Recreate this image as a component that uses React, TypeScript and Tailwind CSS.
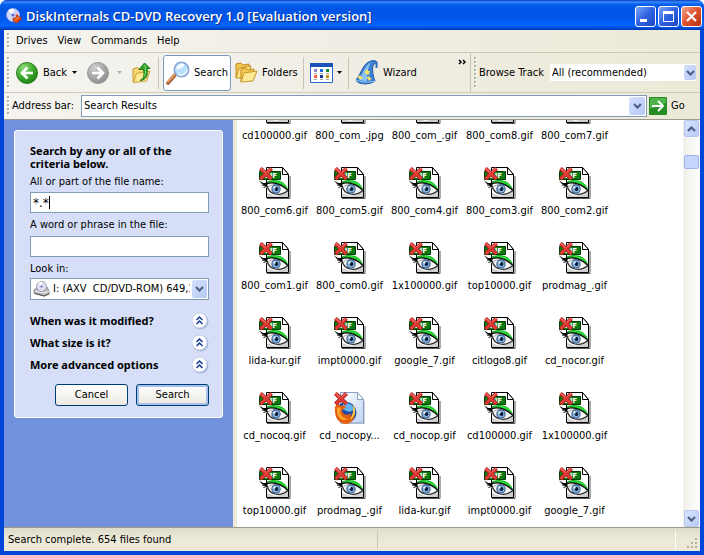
import { useState } from "react";
import type { ReactNode } from "react";

const files = [
  "cd100000.gif", "800_com_.jpg", "800_com_.gif", "800_com8.gif", "800_com7.gif",
  "800_com6.gif", "800_com5.gif", "800_com4.gif", "800_com3.gif", "800_com2.gif",
  "800_com1.gif", "800_com0.gif", "1x100000.gif", "top10000.gif", "prodmag_.gif",
  "lida-kur.gif", "impt0000.gif", "google_7.gif", "citlogo8.gif", "cd_nocor.gif",
  "cd_nocoq.gif", "cd_nocopy...", "cd_nocop.gif", "cd100000.gif", "1x100000.gif",
  "top10000.gif", "prodmag_.gif", "lida-kur.gif", "impt0000.gif", "google_7.gif",
];

const menus = ["Drives", "View", "Commands", "Help"];
const filters = ["When was it modified?", "What size is it?", "More advanced options"];

function RedCross() {
  return (
    <>
      <path d="M1.500 1.500l11 10.500M12.500 1.500L1.500 12" stroke="#a32020" strokeWidth="4" />
      <path d="M1.500 1.500l11 10.500M12.500 1.500L1.500 12" stroke="#e03a34" strokeWidth="2.600" />
      <path d="M1.500 1l5 4.500M12 1L8 5" stroke="#f58078" strokeWidth="1" />
    </>
  );
}

function GifIcon() {
  return (
    <svg width="32" height="32" viewBox="0 0 32 32" fill="none" aria-hidden="true">
      <path d="M8 31.500h23V9" stroke="#555" />
      <path d="M7.500.500h16l6 7v23h-22z" fill="#fff" stroke="#000" />
      <path d="M23.500.500v7h6z" fill="#fff" stroke="#000" />
      <path d="M8 26l8 3 9-2 4-3v6H8z" fill="#d0d0d0" />
      <path d="M.500 4.500h21v8H.500z" fill="#0b7a12" stroke="#013d05" />
      <text x="5" y="11" fill="#fff" fontSize="7" fontWeight="700" fontFamily="'DejaVu Sans', sans-serif">GIF</text>
      {/* eyeball */}
      <path d="M7 20c3-4 15-5 22 4-3 3-8 4-12 4-5-1-8-4-10-8z" fill="#f6f6f6" />
      <path d="M8 21c3-3 6-3.500 9-3.500s8 2 11 5" stroke="#a5a5a5" />
      {/* eyelid and lashes */}
      <path d="M8 14.500c7-3 18-2 21.500 9C25 18 17 14.500 8 16z" fill="#16b724" />
      <path d="M12 14c7-.500 13 2 16 6-5-3.500-9-4.500-16-6z" fill="#35e83c" />
      <path d="M8 16.500c8-2 16 2 21.500 7.500" stroke="#0a0a0a" strokeWidth="1.400" />
      <path d="M0 13.500l4 2.500 5 0-1 3-4-1.500-1.500-1z" fill="#000" />
      <path d="M3 18l5 .500M4.500 20.500l4-1.500" stroke="#000" />
      <path d="M8 19c1 4 4 7 8 8 5 1 10-1 13-3.500" stroke="#2d2d2d" strokeWidth="1.200" />
      <circle cx="17" cy="22" r="4.700" fill="#3c5f8c" />
      <circle cx="17" cy="22" r="3.600" fill="#86b4e0" />
      <circle cx="17.500" cy="22" r="1.900" fill="#0a1a30" />
      <path d="M14.500 19.500h2v2h-2z" fill="#f2faff" />
      <RedCross />
    </svg>
  );
}

function FirefoxFileIcon() {
  return (
    <svg width="32" height="32" viewBox="0 0 32 32" fill="none" aria-hidden="true">
      <defs>
        <linearGradient id="sheet" x1="0" y1="0" x2="1" y2="1">
          <stop stopColor="#fff" />
          <stop offset="1" stopColor="#bcd3f3" />
        </linearGradient>
      </defs>
      <path d="M7 32h23V9" stroke="#9aa4b8" />
      <path d="M6.500.500h17l6 7v23.500h-23z" fill="url(#sheet)" stroke="#8ba0c4" />
      <path d="M23.500.500v7h6z" fill="#fff" stroke="#8ba0c4" />
      <circle cx="12" cy="20.500" r="10.500" fill="#1f4aa8" />
      <path d="M9 12c5-2 11 1 11 6l-5 2-7-3z" fill="#62b4ee" />
      <path d="M1 15c1-2 2-3 3-5 1 2 1 3 3 4 2-1 3 0 5 1-1 2-4 2-4 4 1 4 6 5 9 2 0 2-1 4-2 4 4-1 5-6 4-11 4 7 2 17-7 18C3 32 0 22 1 15z" fill="#e2600f" />
      <path d="M3 16c2-1 3-1 4 0-2 6 1 10 7 11-4 3-12 0-11-11z" fill="#fba42a" />
      <path d="M19 12c4 6 2 13-3 16 3-5 4-10 3-16z" fill="#ffd34f" />
      <RedCross />
    </svg>
  );
}

function AppIcon() {
  return (
    <svg width="16" height="16" viewBox="0 0 16 16" aria-hidden="true">
      <circle cx="7" cy="7" r="6.500" fill="#cdd8fa" stroke="#93a7e8" />
      <path d="M7 7L2 2.500A6 6 0 018 1z" fill="#fff" />
      <path d="M7 7l5-4a6 6 0 011 5z" fill="#e5c9f0" />
      <circle cx="7" cy="7" r="1.600" fill="#5674cf" />
      <path d="M10 7h2v2h3v3h-2v2h-2v1H9v-2H7v-3h3z" fill="#e84a10" stroke="#a82c06" strokeWidth=".6" />
      <path d="M10 10h3M8.500 12h2" stroke="#ff9955" />
    </svg>
  );
}

function ArrowCircle({ forward = false }: { forward?: boolean }) {
  return (
    <svg width="22" height="22" viewBox="0 0 22 22" fill="none" aria-hidden="true">
      <defs>
        <radialGradient id={forward ? "gray" : "green"} cx=".35" cy=".25" r=".8">
          <stop stopColor={forward ? "#cfcfcf" : "#8fdc78"} />
          <stop offset=".6" stopColor={forward ? "#a5a5a5" : "#3aa62c"} />
          <stop offset="1" stopColor={forward ? "#8d8d8d" : "#1c7d15"} />
        </radialGradient>
      </defs>
      <circle cx="11" cy="11" r="10.500" fill={forward ? "url(#gray)" : "url(#green)"} stroke={forward ? "#9b9b9b" : "#2b7f22"} />
      <path
        d={forward ? "M5 11h11M10.500 5.500L16 11l-5.500 5.500" : "M17 11H6M11.500 5.500L6 11l5.500 5.500"}
        stroke="#fff"
        strokeWidth="2.600"
      />
    </svg>
  );
}

function FolderUpIcon() {
  return (
    <svg width="20" height="22" viewBox="0 0 20 22" strokeLinejoin="round" aria-hidden="true">
      <path d="M1 20V7l4-1.500 2 1.500 5-1v12z" fill="#f7d572" stroke="#c79a2e" />
      <path d="M1.500 20.500l3-9L18 9l-3.500 10z" fill="#ffe995" stroke="#c9a136" />
      <path d="M8 18.500c4-1.500 4.500-5 3.500-11H7L12.500 1 18 6.500h-3c1.500 7-1 11.500-7 12z" fill="#35a52c" stroke="#1f7a1a" />
      <path d="M12.500 3c1.500 4 1.500 8 0 11" fill="none" stroke="#83da72" />
    </svg>
  );
}

function SearchIcon() {
  return (
    <svg width="24" height="24" viewBox="0 0 24 24" aria-hidden="true">
      <path d="M9 14l-7 8" stroke="#9a5a30" strokeWidth="3.600" strokeLinecap="round" />
      <path d="M8.500 14L2 21" stroke="#eda468" strokeWidth="1.800" strokeLinecap="round" />
      <circle cx="15.500" cy="8.500" r="7.200" fill="#b5dffb" stroke="#8fa6d8" strokeWidth="1.600" />
      <path d="M10 8a6 6 0 018-5c1 3-3 6-8 5z" fill="#f1fbff" />
      <path d="M12 13a6 6 0 009-4" fill="none" stroke="#e9f8ff" strokeWidth="1.500" />
    </svg>
  );
}

function FoldersIcon() {
  return (
    <svg width="23" height="22" viewBox="0 0 23 22" strokeLinejoin="round" aria-hidden="true">
      <path d="M1 16V2l5-1 2 2 6-1v4" fill="#f4c652" stroke="#bd8b20" />
      <path d="M1 16L4 6l12-2-3 12z" fill="#ffe287" stroke="#c4952b" />
      <path d="M6 20V7l5-1 2 2 6-1v4" fill="#f4c652" stroke="#bd8b20" />
      <path d="M6 20l3-9 13-2-4 10z" fill="#ffe995" stroke="#c4952b" />
    </svg>
  );
}

function ViewsIcon() {
  return (
    <svg width="23" height="20" viewBox="0 0 23 20" aria-hidden="true">
      <path d="M.500.500h22v19H.500z" fill="#fff" stroke="#2a63c8" />
      <path d="M0 0h23v4H0z" fill="#1d50b8" />
      <path d="M4 6h3v3H4z" fill="#8b83c9" />
      <path d="M10 6h3v3h-3z" fill="#1d6be0" />
      <path d="M16 6h3v3h-3z" fill="#168a2b" />
      <path d="M4 12h3v3H4z" fill="#f2643c" />
      <path d="M10 12h3v3h-3z" fill="#14348e" />
      <path d="M16 12h3v3h-3z" fill="#c7931e" />
      <path d="M4 10.500h3m3 0h3m3 0h3M4 16.500h3m3 0h3m3 0h3" stroke="#a9a9a9" />
    </svg>
  );
}

function WizardIcon() {
  return (
    <svg width="24" height="25" viewBox="0 0 24 25" aria-hidden="true">
      <path d="M1 20C6 14 8 3 16 1c3-1 5 0 6 1l-4 3c-1 6 0 11 2 16-5 4-17 4-19-1z" fill="#3a82d4" stroke="#2459a6" />
      <path d="M4 19C8 14 10 5 16 2c-3 5-4 12-4 19-3 0-6 0-8-2z" fill="#8cc3f2" />
      <path d="M1 20c3 2 14 3 19 1" fill="none" stroke="#9ccbf5" />
      <path d="M21.500 2v6" stroke="#2a6fc4" strokeWidth="2" />
      <path d="M12 9l1 2 2 0-1 2 1 2-2-1-2 1 0-2-2-1 2-1zM5 15l1 2 2 0-2 2-1 1-1-2-2-1 2-1zM14 16l1 2 2 0-2 2-1 1-1-2-2-1 2-1z" fill="#ffe45c" />
    </svg>
  );
}

function DriveIcon() {
  return (
    <svg width="17" height="16" viewBox="0 0 17 16" className="shrink-0" aria-hidden="true">
      <path d="M1 9l4-3h9l2 4v3l-5 2-10-3z" fill="#b9b9b9" stroke="#8a8a8a" />
      <path d="M2 10l9 2 5-2" fill="none" stroke="#f5f5f5" />
      <path d="M1.500 12.500l9.500 2.500 5-2" fill="none" stroke="#555" />
      <circle cx="8.500" cy="5.500" r="5" fill="#dfe0f2" stroke="#9c9cb8" />
      <path d="M8.500 5.500L5 2a5 5 0 014-1z" fill="#fff" />
      <circle cx="8.500" cy="5.500" r="1.300" fill="#8b8bc2" />
    </svg>
  );
}

function Chevron({ up = false }: { up?: boolean }) {
  return (
    <svg width="9" height="6" viewBox="0 0 9 6" fill="none" aria-hidden="true">
      <path d={up ? "M1 5l3.500-3.500L8 5" : "M1 1l3.500 3.500L8 1"} stroke="#4d6185" strokeWidth="2.200" />
    </svg>
  );
}

function Caret({ muted = false }: { muted?: boolean }) {
  return (
    <svg width="5" height="3" viewBox="0 0 5 3" aria-hidden="true">
      <path d="M0 0h5L2.500 3z" fill={muted ? "#b5b2a3" : "#000"} />
    </svg>
  );
}

function Grip() {
  return (
    <svg className="h-full w-[3px] shrink-0" aria-hidden="true">
      <defs>
        <pattern id="grip" width="3" height="4" patternUnits="userSpaceOnUse">
          <path d="M1 1h2v2H1z" fill="#fff" />
          <path d="M0 0h2v2H0z" fill="#b5b1a0" />
        </pattern>
      </defs>
      <rect width="3" height="100%" fill="url(#grip)" />
    </svg>
  );
}

function Separator() {
  return <div className="h-8 w-px shrink-0 bg-[#c9c5b2]" />;
}

function DropBox({ className }: { className: string }) {
  return (
    <span className={`pointer-events-none flex items-center justify-center rounded-xs bg-linear-to-br from-[#d5e1fd] to-[#b4c8f6] ${className}`}>
      <Chevron />
    </span>
  );
}

function CaptionButton({ label, className, children }: { label: string; className: string; children: ReactNode }) {
  return (
    <button aria-label={label} className={`flex size-[21px] items-center justify-center rounded-[3px] border border-white bg-linear-to-br ${className}`}>
      <svg width="19" height="19" viewBox="0 0 19 19" fill="none">{children}</svg>
    </button>
  );
}

function TitleBar() {
  return (
    <header className="flex h-[30px] shrink-0 items-center gap-1 rounded-t-[7px] bg-[linear-gradient(#0a3fc0_0%,#3a8cff_7%,#0860ee_14%,#0054e3_30%,#0057ea_60%,#0566ff_85%,#0048d0_95%,#0036b0_100%)] pt-1 pr-0.5 pb-0.5 pl-1.5">
      <AppIcon />
      <h1 className="flex-1 font-['Open_Sans',sans-serif] text-[13px] leading-5 font-semibold whitespace-nowrap text-white [text-shadow:1px_1px_#0a2c86]">
        DiskInternals CD-DVD Recovery 1.0 [Evaluation version]
      </h1>
      <div className="flex gap-0.5">
        <CaptionButton label="Minimize" className="from-[#7ea2f6] via-[#2f61e2] to-[#1c48c0]">
          <path d="M4 13.500h7" stroke="#fff" strokeWidth="3" />
        </CaptionButton>
        <CaptionButton label="Maximize" className="from-[#7ea2f6] via-[#2f61e2] to-[#1c48c0]">
          <path d="M4.500 4.500h10v10h-10z" stroke="#fff" />
          <path d="M4 5.500h11" stroke="#fff" strokeWidth="3" />
        </CaptionButton>
        <CaptionButton label="Close" className="from-[#f0a08a] via-[#e0502c] to-[#b8300e]">
          <path d="M5 5l9 9M14 5l-9 9" stroke="#fff" strokeWidth="2.200" />
        </CaptionButton>
      </div>
    </header>
  );
}

function Toolbar() {
  return (
    <div className="flex h-10 shrink-0 items-center border-b border-[#cfcbb8] pl-[3px]">
      <div className="h-8"><Grip /></div>
      <button className="ml-1.5 flex items-center gap-1">
        <ArrowCircle />
        <span className="w-[26px]">Back</span>
        <Caret />
      </button>
      <button className="ml-2.5 flex items-center gap-2" aria-label="Forward" disabled>
        <ArrowCircle forward />
        <Caret muted />
      </button>
      <button className="mr-1.5 ml-2.5" aria-label="Up"><FolderUpIcon /></button>
      <Separator />
      <button className="ml-1 flex h-9 w-[68px] shrink-0 items-center gap-1 rounded-[3px] border border-[#7a9ac0] bg-white pl-0.5">
        <SearchIcon />
        Search
      </button>
      <button className="mx-1 flex w-16 shrink-0 items-center gap-1"><FoldersIcon />Folders</button>
      <Separator />
      <button className="mx-1.5 flex items-center gap-1" aria-label="Views"><ViewsIcon /><Caret /></button>
      <Separator />
      <button className="ml-1.5 flex items-center gap-1"><WizardIcon />Wizard</button>
      <button className="mr-1 ml-auto self-start pt-1.5" aria-label="More tools">
        <svg width="8" height="7" viewBox="0 0 8 7" fill="none">
          <path d="M1 1l2 2-2 2M5 1l2 2-2 2" stroke="#000" strokeWidth="1.500" />
        </svg>
      </button>
      <div className="h-full w-px bg-[#c9c5b2]" />
      <div className="ml-[3px] h-8"><Grip /></div>
      <label htmlFor="track" className="ml-0.5 w-[71px]">Browse Track</label>
      <div className="relative mr-1 h-[17px] w-[146px] bg-white">
        <select id="track" className="h-full w-full appearance-none pl-0.5 outline-none">
          <option>All (recommended)</option>
        </select>
        <DropBox className="absolute top-px right-0 h-[15px] w-3" />
      </div>
    </div>
  );
}

function AddressBar() {
  return (
    <div className="flex h-[26px] shrink-0 items-center pl-[3px]">
      <div className="h-5"><Grip /></div>
      <label htmlFor="address" className="ml-0.5 w-[69px]">Address bar:</label>
      <div className="flex h-[22px] flex-1 items-center border border-[#7f9db9] bg-white pr-px">
        <input id="address" defaultValue="Search Results" className="h-full min-w-0 flex-1 pb-0.5 pl-0.5 outline-none" />
        <button aria-label="Show addresses"><DropBox className="h-[18px] w-4" /></button>
      </div>
      <button className="ml-0.5 flex w-[51px] items-center gap-1">
        <svg width="18" height="18" viewBox="0 0 18 18" fill="none" aria-hidden="true">
          <rect width="18" height="18" rx="1" fill="#238d24" />
          <path d="M1 1h16v5L1 12z" fill="#4db247" />
          <path d="M3 9h11M9 4l5 5-5 5" stroke="#fff" strokeWidth="2" />
        </svg>
        Go
      </button>
    </div>
  );
}

function SearchPanel() {
  const [name, setName] = useState("*.*");
  const [phrase, setPhrase] = useState("");

  return (
    <aside className="w-[229px] shrink-0 overflow-hidden bg-[#7392de] p-2.5">
      <form className="rounded-[3px] border border-white bg-[#d6dff7] px-[15px] pt-[13px] pr-[13px] pb-[11px]">
        <h2 className="mb-0.5 font-['Noto_Sans',sans-serif] text-[11px] leading-[13px] font-bold">
          Search by any or all of the criteria below.
        </h2>
        <label htmlFor="name" className="block h-5 leading-5">All or part of the file name:</label>
        <div className="mb-0.5 flex h-[21px] items-center border border-[#7f9db9] bg-white">
          <input
            id="name"
            value={name}
            onChange={(e) => setName(e.target.value)}
            size={1}
            className="field-sizing-content h-full pl-0.5 font-['DejaVu_Sans',sans-serif] text-[12px] outline-none"
          />
          <span className="h-[13px] w-px bg-black" />
        </div>
        <label htmlFor="phrase" className="mb-px block h-5 leading-5">A word or phrase in the file:</label>
        <input
          id="phrase"
          value={phrase}
          onChange={(e) => setPhrase(e.target.value)}
          className="block h-[21px] w-full border border-[#7f9db9] bg-white px-0.5 outline-none"
        />
        <label htmlFor="drive" className="mt-[3px] block h-[18px] leading-[18px]">Look in:</label>
        <div className="relative flex h-[22px] items-center border border-[#7f9db9] bg-white pr-[18px] pl-0.5">
          <DriveIcon />
          <select id="drive" className="h-full min-w-0 flex-1 appearance-none overflow-hidden pl-[3px] text-clip outline-none">
            <option>I: (AXV&nbsp; CD/DVD-ROM) 649,1 MB</option>
          </select>
          <DropBox className="absolute top-px right-px h-[18px] w-[15px]" />
        </div>
        <div className="mt-2.5 mb-2">
          {filters.map((filter) => (
            <button key={filter} type="button" className="flex h-[22px] w-full items-center justify-between font-['Noto_Sans',sans-serif] font-bold">
              {filter}
              <svg width="18" height="18" viewBox="0 0 18 18" fill="none" aria-hidden="true">
                <circle cx="9.500" cy="9.500" r="8" fill="#aab8de" />
                <circle cx="8.500" cy="8.500" r="7.500" fill="#fff" stroke="#c3cde9" />
                <path d="M5.500 8l3-3 3 3M5.500 12l3-3 3 3" stroke="#123a94" strokeWidth="1.500" />
              </svg>
            </button>
          ))}
        </div>
        <div className="flex justify-end gap-2">
          <button type="button" className="h-[22px] w-[73px] rounded-[3px] border border-[#003c74] bg-linear-to-b from-white to-[#ebe9df]">
            Cancel
          </button>
          <button type="button" className="h-[22px] w-[73px] rounded-[3px] border border-[#003c74] bg-linear-to-b from-white to-[#ebe9df] inset-ring-2 inset-ring-[#a6c0f0]">
            Search
          </button>
        </div>
      </form>
    </aside>
  );
}

function ScrollBar() {
  return (
    <div className="flex w-[17px] shrink-0 flex-col bg-linear-to-r from-[#f0f0ea] to-[#fefefd] px-px">
      <button aria-label="Scroll up" className="flex h-[17px] items-center justify-center rounded-xs border border-[#b5c6f0] bg-linear-to-br from-[#d8e3fd] to-[#b8cbf8]">
        <Chevron up />
      </button>
      <div className="mt-[18px] h-[14px] rounded-xs border border-[#9eb4e6] bg-[#c5d5fc]" />
      <button aria-label="Scroll down" className="mt-auto flex h-[17px] items-center justify-center rounded-xs border border-[#b5c6f0] bg-linear-to-br from-[#d8e3fd] to-[#b8cbf8]">
        <Chevron />
      </button>
    </div>
  );
}

export default function App() {
  return (
    <div className="bg-white">
      <div className="flex h-screen flex-col rounded-t-[7px] bg-[#0046d8] font-['DejaVu_Sans_Condensed','Open_Sans',sans-serif] text-[11px] leading-[14px] text-black">
        <TitleBar />
        <div className="mx-1 mb-1 flex min-h-0 flex-1 flex-col bg-linear-to-r from-[#f4f3ef] to-[#ece9d8]">
          <nav className="flex h-[23px] shrink-0 items-center border-b border-[#cfcbb8] pl-[3px]">
            <div className="h-4"><Grip /></div>
            <div className="ml-1.5 flex gap-2.5">
              {menus.map((menu) => (
                <button key={menu}>{menu}</button>
              ))}
            </div>
          </nav>
          <Toolbar />
          <AddressBar />
          <main className="flex min-h-0 flex-1 border-y border-[#9d9a8c]">
            <SearchPanel />
            <div className="w-1 shrink-0 bg-[#ece9d8]" />
            <div className="min-w-0 flex-1 overflow-hidden bg-white">
              {/* scrolled a little into the list */}
              <ul className="-mt-7 grid grid-cols-[repeat(auto-fill,75px)]">
                {files.map((file, index) => (
                  <li key={index} className="flex h-[75px] flex-col items-center gap-[5px]">
                    {file === "cd_nocopy..." ? <FirefoxFileIcon /> : <GifIcon />}
                    <span>{file}</span>
                  </li>
                ))}
              </ul>
            </div>
            <ScrollBar />
          </main>
          <footer className="flex h-[23px] shrink-0 items-center bg-linear-to-b from-[#dedbcb] via-[#ece9d8] to-[#ece9d8]">
            <span className="flex-1 pl-1">Search complete. 654 files found</span>
            <span className="h-[18px] w-[299px] border-x border-l-[#c9c5b2] border-r-white" />
            <svg width="24" height="18" viewBox="0 0 24 18" className="self-end" aria-hidden="true">
              <path d="M19 5h2v2h-2zM15 9h2v2h-2zM19 9h2v2h-2zM11 13h2v2h-2zM15 13h2v2h-2zM19 13h2v2h-2z" fill="#b5b19e" />
            </svg>
          </footer>
        </div>
      </div>
    </div>
  );
}
